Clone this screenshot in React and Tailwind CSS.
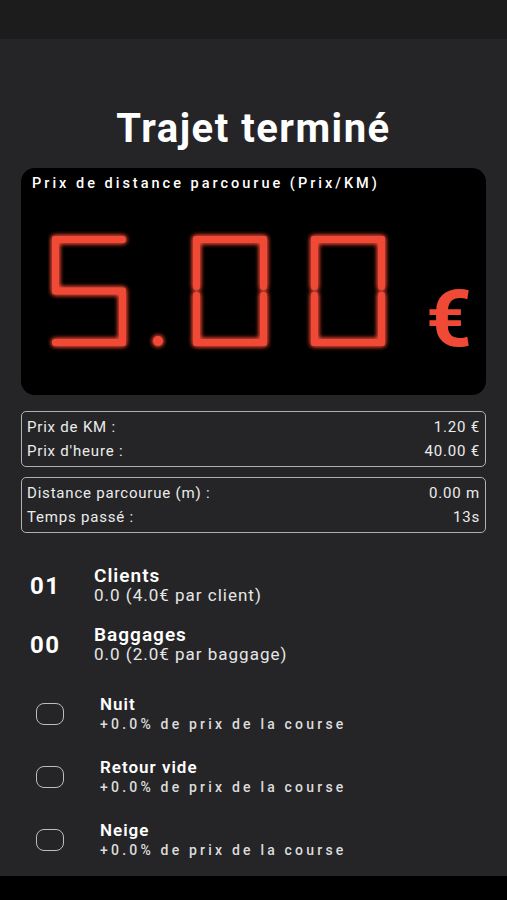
import React from "react";

const RED = "#f04a36";

function Segments({ x, digit }) {
  const w = 74;
  const t = 7;
  const top = 5;
  const bot = 115;
  const mid = 60;
  const segs = {
    a: { x: x, y: top, w: w, h: t },
    b: { x: x + w - t, y: top, w: t, h: mid - top - 1 },
    c: { x: x + w - t, y: mid + 1, w: t, h: bot - mid - 1 },
    d: { x: x, y: bot - t, w: w, h: t },
    e: { x: x, y: mid + 1, w: t, h: bot - mid - 1 },
    f: { x: x, y: top, w: t, h: mid - top - 1 },
    g: { x: x, y: mid - t / 2, w: w, h: t },
  };
  const map = { 5: ["a", "f", "g", "c", "d"], 0: ["a", "b", "c", "d", "e", "f"] };
  return map[digit].map((k) => (
    <rect key={k} x={segs[k].x} y={segs[k].y} width={segs[k].w} height={segs[k].h} rx="3" fill={RED} />
  ));
}

function Afficheur() {
  return (
    <svg width="345" height="122" viewBox="0 0 345 122" className="block">
      <defs>
        <filter id="glow" x="-20%" y="-20%" width="140%" height="140%">
          <feGaussianBlur stdDeviation="2.5" result="b" />
          <feMerge>
            <feMergeNode in="b" />
            <feMergeNode in="b" />
            <feMergeNode in="SourceGraphic" />
          </feMerge>
        </filter>
      </defs>
      <g filter="url(#glow)">
        <Segments x={4} digit={5} />
        <circle cx="110" cy="110" r="5" fill={RED} />
        <Segments x={145} digit={0} />
        <Segments x={263} digit={0} />
      </g>
    </svg>
  );
}

function Ligne({ label, valeur }) {
  return (
    <div className="flex justify-between leading-[24px]">
      <span>{label}</span>
      <span>{valeur}</span>
    </div>
  );
}

function Compteur({ nombre, titre, detail }) {
  return (
    <div className="flex items-center">
      <div className="w-[73px] pl-[9px] text-[24px] font-bold tracking-[1.5px]">{nombre}</div>
      <div>
        <div className="text-[19px] font-semibold tracking-[1px] leading-[20px]">{titre}</div>
        <div className="text-[17px] tracking-[1px] leading-[19px] text-[#e6e6e6]">{detail}</div>
      </div>
    </div>
  );
}

function Option({ titre }) {
  return (
    <div className="flex items-center h-[63px]">
      <div className="w-[79px] pl-[15px]">
        <div className="w-[28px] h-[22px] rounded-[8px] border-[1.5px] border-[#bdbdbd]" />
      </div>
      <div>
        <div className="text-[17px] font-semibold tracking-[1px] leading-[20px]">{titre}</div>
        <div className="text-[14px] font-medium tracking-[3.2px] leading-[20px] text-[#dcdcdc]">
          +0.0% de prix de la course
        </div>
      </div>
    </div>
  );
}

export default function App() {
  return (
    <div className="h-[900px] flex flex-col text-white" style={{ fontFamily: "Roboto, 'Liberation Sans', sans-serif" }}>
      <div className="h-[39px] bg-[#1c1c1d]" />
      <div className="flex-1 bg-[#252527] px-[21px]">
        <h1 className="mt-[68px] text-center text-[40px] font-bold tracking-[1.5px] leading-[44px]">Trajet terminé</h1>
        <div className="mt-[17px] h-[227px] rounded-[14px] bg-black">
          <div className="pl-[11px] pt-[7px] text-[14.5px] font-medium tracking-[3px] leading-[18px]">
            Prix de distance parcourue (Prix/KM)
          </div>
          <div className="flex items-end mt-[38px] pl-[27px]">
            <Afficheur />
            <span className="ml-[33px] mb-[-6px] text-[80px] font-bold leading-[80px] text-[#f04a36]">€</span>
          </div>
        </div>
        <div className="mt-[16px] border-[1.5px] border-[#b0b0b0] rounded-[5px] px-[5px] py-[3px] text-[15px] tracking-[0.8px] text-[#ececec]">
          <Ligne label="Prix de KM :" valeur="1.20 €" />
          <Ligne label="Prix d'heure :" valeur="40.00 €" />
        </div>
        <div className="mt-[10px] border-[1.5px] border-[#b0b0b0] rounded-[5px] px-[5px] py-[3px] text-[15px] tracking-[0.8px] text-[#ececec]">
          <Ligne label="Distance parcourue (m) :" valeur="0.00 m" />
          <Ligne label="Temps passé :" valeur="13s" />
        </div>
        <div className="mt-[33px] flex flex-col gap-[20px]">
          <Compteur nombre="01" titre="Clients" detail="0.0 (4.0€ par client)" />
          <Compteur nombre="00" titre="Baggages" detail="0.0 (2.0€ par baggage)" />
        </div>
        <div className="mt-[18px]">
          <Option titre="Nuit" />
          <Option titre="Retour vide" />
          <Option titre="Neige" />
        </div>
      </div>
      <div className="h-[24px] bg-black" />
    </div>
  );
}
